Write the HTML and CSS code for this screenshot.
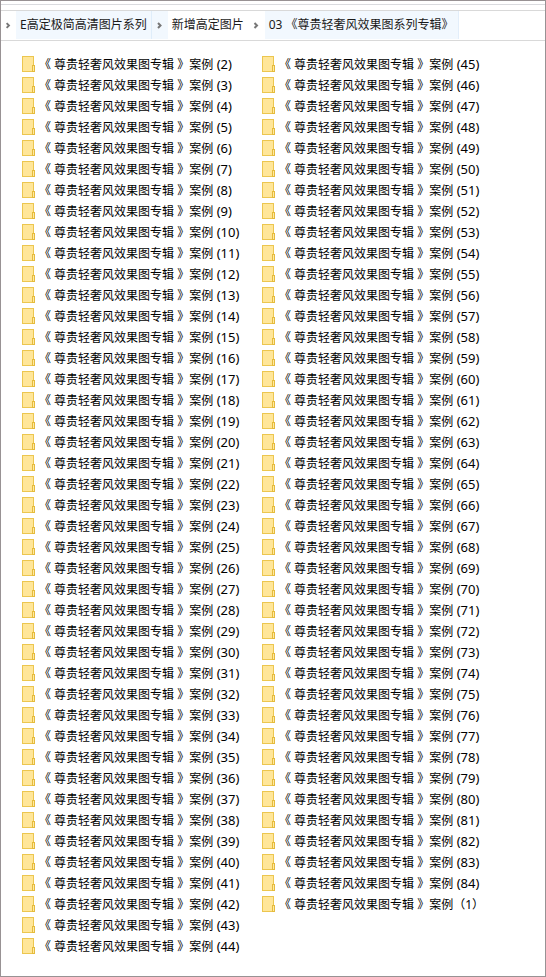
FILE: index.html
```
<!DOCTYPE html>
<html lang="zh-CN">
<head>
    <meta charset="UTF-8">
    <meta name="viewport" content="width=device-width, initial-scale=1.0">
    <title>03 《尊贵轻奢风效果图系列专辑》</title>
    <link rel="stylesheet" href="styles.css">
</head>
<body>

<div class="window">
    <div class="toolbar"></div>
    <nav class="address">
        <svg class="arrow first" viewBox="0 0 16 28"><path d="M6 12l2.5 2.5L6 17"/></svg>
        <div class="crumb active">
            <a href="#">E高定极简高清图片系列</a>
            <svg class="arrow split" viewBox="0 0 16 28"><path d="M6 12l2.5 2.5L6 17"/></svg>
        </div>
        <div class="crumb">
            <a href="#">新增高定图片</a>
            <svg class="arrow" viewBox="0 0 16 28"><path d="M6 12l2.5 2.5L6 17"/></svg>
        </div>
        <div class="crumb active last">
            <a href="#">03 《尊贵轻奢风效果图系列专辑》</a>
        </div>
    </nav>
    <ul class="files" id="files"></ul>
</div>

<script>
    var icon = '<svg class="folder" viewBox="0 0 13 16">' +
        '<rect class="back" x="0.5" y="0.5" width="11" height="15"/>' +
        '<rect class="tab" x="10.5" y="9.5" width="2" height="6"/></svg>';
    var html = '';

    function addFolder(number) {
        html += '<li>' + icon + '<span>《 尊贵轻奢风效果图专辑 》案例' + number + '</span></li>';
    }

    for (var i = 2; i <= 84; i++) {
        addFolder('<span class="number"> (' + i + ')</span>');
    }
    // full-width brackets sort after the rest
    addFolder('（1）');

    document.getElementById('files').innerHTML = html;
</script>

</body>
</html>
```

FILE: styles.css
```
* {
    box-sizing: border-box;
}
body {
    margin: 0;
    font-family: "Noto Sans", "Noto Sans CJK SC", sans-serif;
    font-size: 12px;
    color: #000000;
    background-color: #ffffff;
}
.window {
    min-height: 100vh;
    border: 1px solid #989294;
}
.toolbar {
    height: 10px;
    padding-top: 3px;
    border-bottom: 1px solid #d9d9d9;
}
.toolbar::before {
    content: "";
    display: block;
    border-top: 1px solid #dadbdf;
}
.address {
    display: flex;
    height: 30px;
    border-bottom: 1px solid #d9d9d9;
}
.crumb {
    display: flex;
    height: 28px;
}
.crumb a {
    padding: 0 4px;
    line-height: 28px;
    color: #1a1a1a;
    text-decoration: none;
    white-space: nowrap;
}
.crumb.active {
    background-color: #f2f8fe;
}
.crumb.last {
    border-right: 1px solid #e3eefa;
}
.arrow {
    flex: none;
    width: 17px;
    height: 28px;
    fill: none;
    stroke: #777777;
    stroke-width: 2;
}
.arrow.first {
    width: 15px;
}
.arrow.split {
    border-left: 1px solid #dfedfa;
}
.files {
    display: grid;
    grid-template-rows: repeat(43, 21px);
    grid-auto-flow: column;
    grid-auto-columns: 240px;
    margin: 0;
    padding: 13px 0 0 21px;
    list-style: none;
}
.files li {
    display: flex;
    align-items: flex-start;
    gap: 4px;
    line-height: 21px;
    white-space: nowrap;
}
.folder {
    width: 13px;
    height: 16px;
    margin-top: 2px;
}
.folder .back {
    fill: #ffe699;
    stroke: #ecc64f;
}
.folder .tab {
    fill: #ffe9a2;
    stroke: #e5bb3c;
}
.number {
    font-size: 13px;
}
```
